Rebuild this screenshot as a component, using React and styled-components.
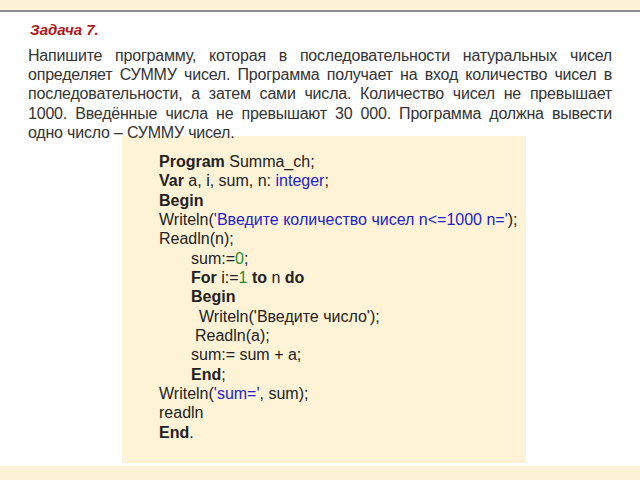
import React from "react";
import styled, { createGlobalStyle } from "styled-components";

const G = createGlobalStyle`
  body { margin: 0; background: #fff; font-family: "Liberation Sans", Arial, sans-serif; }
`;
const Page = styled.div`width: 640px; height: 480px; display: flex; flex-direction: column; overflow: hidden;`;
const TopBand = styled.div`height: 10px; background: #fdf1d8; border-bottom: 2px solid #8a8a8a;`;
const Title = styled.div`margin: 9px 0 0 30px; color: #b01818; font-weight: bold; font-style: italic; font-size: 15px; line-height: 18px;`;
const Para = styled.p`margin: 7px 28px 0 28px; font-size: 16px; letter-spacing: -0.2px; line-height: 19.2px; color: #333; text-align: justify; position: relative; z-index: 1;`;
const Box = styled.div`margin: -6px 0 0 122px; width: 404px; height: 327px; background: #fef3d6; box-sizing: border-box; padding: 16px 0 0 37px; font-size: 16px; line-height: 19.33px; color: #222;`;
const Line = styled.div`padding-left: ${p => p.$i || 0}px; white-space: pre;`;
const K = styled.b``;
const S = styled.span`color: #2222cc;`;
const N = styled.span`color: #2a8a2a;`;
const Bottom = styled.div`margin-top: 3px; flex: 1; background: #fdf1d8;`;

export default function App() {
  return (
    <Page>
      <G />
      <TopBand />
      <Title>Задача 7.</Title>
      <Para>Напишите программу, которая в последовательности натуральных чисел определяет СУММУ чисел. Программа получает на вход количество чисел в последовательности, а затем сами числа. Количество чисел не превышает 1000. Введённые числа не превышают 30 000. Программа должна вывести одно число – СУММУ чисел.</Para>
      <Box>
        <Line><K>Program</K> Summa_ch;</Line>
        <Line><K>Var</K> a, i, sum, n: <S>integer</S>;</Line>
        <Line><K>Begin</K></Line>
        <Line>Writeln(<S>'Введите количество чисел n&lt;=1000 n='</S>);</Line>
        <Line>Readln(n);</Line>
        <Line $i={32}>sum:=<N>0</N>;</Line>
        <Line $i={32}><K>For</K> i:=<N>1</N> <K>to</K> n <K>do</K></Line>
        <Line $i={32}><K>Begin</K></Line>
        <Line $i={40}>Writeln('Введите число');</Line>
        <Line $i={36}>Readln(a);</Line>
        <Line $i={32}>sum:= sum + a;</Line>
        <Line $i={32}><K>End</K>;</Line>
        <Line>Writeln(<S>'sum='</S>, sum);</Line>
        <Line>readln</Line>
        <Line><K>End</K>.</Line>
      </Box>
      <Bottom />
    </Page>
  );
}
